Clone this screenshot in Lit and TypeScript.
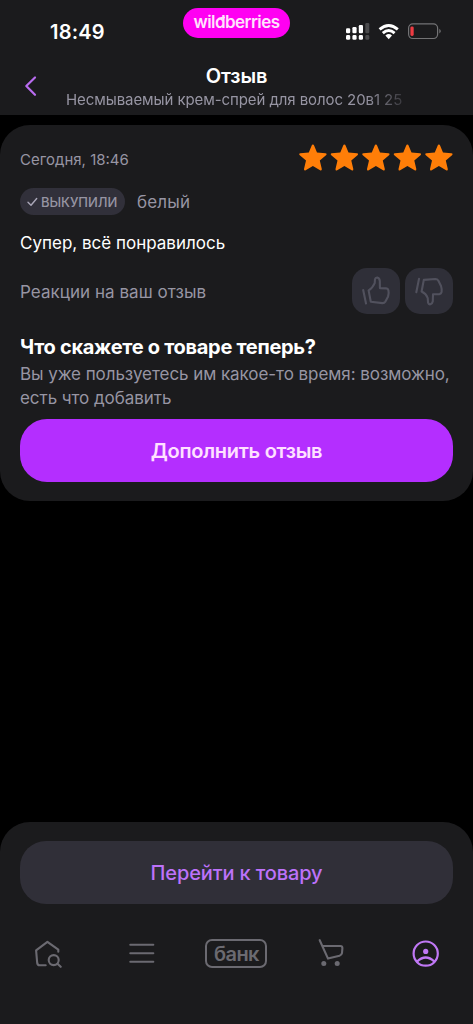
import { LitElement, html, svg, css } from "lit";
import { customElement } from "lit/decorators.js";

@customElement("status-bar")
class StatusBar extends LitElement {
  static styles = css`
    :host { display: grid; grid-template-columns: 183px 107px 1fr; height: 60px; }
    .time { padding: 20px 0 0 50px; font-size: 20px; line-height: 25px; font-weight: 600; letter-spacing: 0.2px; color: #fff; }
    .brand { height: 30px; margin-top: 8px; border-radius: 15px; background: #ff00f2; color: #ffe3fd; font-size: 17px; font-weight: 600; line-height: 29px; text-align: center; letter-spacing: -0.55px; }
    .stem { position: relative; }
    .stem::after { content: ""; position: absolute; right: 0; top: 5px; width: 7px; height: 1.6px; border-radius: 1px; background: currentColor; transform: rotate(-12deg); }
    .icons { padding: 20px 0 0 55px; }
    svg { display: block; }
  `;
  render() {
    return html`
      <div class="time">18:49</div>
      <div class="brand">wil<span class="stem">d</span>berries</div>
      <div class="icons">
        <svg width="98" height="24" viewBox="345 20 98 24">
          <g fill="#fff">
            <rect x="346" y="28.3" width="4.2" height="5" rx="1.2" />
            <rect x="352.4" y="27" width="4.2" height="6.3" rx="1.2" />
            <rect x="358.8" y="25" width="4.2" height="8.3" rx="1.2" />
            <rect x="346" y="35" width="4.2" height="4.8" rx="1.4" />
            <rect x="352.4" y="35" width="4.2" height="4.8" rx="1.4" />
            <rect x="358.8" y="35" width="4.2" height="4.8" rx="1.4" />
          </g>
          <g fill="#4b4b4d">
            <rect x="365.3" y="23" width="4" height="10.3" rx="1.2" />
            <rect x="365.3" y="35" width="4" height="4.8" rx="1.4" />
          </g>
          <g fill="none" stroke="#fff" stroke-width="2.9">
            <path d="M379.6 29.4Q388.7 21.4 397.8 29.4" />
            <path d="M382.8 33.1Q388.7 28 394.6 33.1" />
          </g>
          <path d="M385.4 35.4Q388.7 32.8 392 35.4L388.7 39.2Z" fill="#fff" />
          <rect x="408.6" y="23.9" width="29" height="14.6" rx="4.2" fill="none" stroke="#737375" stroke-width="1.2" />
          <path d="M439.3 28.8Q442.3 31.2 439.3 33.6Z" fill="#737375" />
          <rect x="410.4" y="26.4" width="3.3" height="9.6" rx="1.4" fill="#ed3b42" />
        </svg>
      </div>
    `;
  }
}

@customElement("page-header")
class PageHeader extends LitElement {
  static styles = css`
    :host { display: grid; grid-template-columns: 66px 341px 66px; height: 55px; }
    .back { padding: 15px 0 0 24px; }
    .titles { text-align: center; white-space: nowrap; }
    .title { padding-top: 4px; font-size: 20px; line-height: 24px; font-weight: 600; color: #fff; letter-spacing: -0.1px; }
    .product { text-align: left; font-size: 15px; line-height: 24px; color: #9795a3; letter-spacing: -0.08px;
      -webkit-mask-image: linear-gradient(90deg, #000 300px, transparent 348px); mask-image: linear-gradient(90deg, #000 300px, transparent 348px); }
    svg { display: block; }
  `;
  render() {
    return html`
      <div class="back">
        <svg width="14" height="22" viewBox="0 0 14 22" fill="none" stroke="#b96cf0" stroke-width="2.2" stroke-linecap="round" stroke-linejoin="round"><path d="M11 2.5L2.3 11L11 19.8" /></svg>
      </div>
      <div class="titles">
        <div class="title">Отзыв</div>
        <div class="product">Несмываемый крем-спрей для волос 20в1 25</div>
      </div>
    `;
  }
}

@customElement("review-card")
class ReviewCard extends LitElement {
  static styles = css`
    :host { display: block; box-sizing: border-box; height: 376px; padding: 18px 20px 0; border-radius: 30px; background: #1b1b1d; color: #9795a3; white-space: nowrap; }
    .top { display: flex; justify-content: space-between; height: 34px; }
    .date { font-size: 15px; line-height: 33px; letter-spacing: 0; }
    .stars { display: block; margin-right: -1px; }
    .meta { display: flex; align-items: center; gap: 12px; height: 27px; margin-top: 11px; }
    .badge { display: flex; align-items: center; box-sizing: border-box; width: 105px; height: 27px; padding-left: 7px; gap: 3px; border-radius: 14px; background: #31303a; font-size: 13px; font-weight: 500; letter-spacing: -0.05px; }
    .variant { font-size: 17px; letter-spacing: 0.15px; }
    .comment { margin-top: 15px; font-size: 17px; line-height: 26px; color: #fff; }
    .reactions { display: flex; align-items: center; gap: 5px; height: 46px; margin-top: 12px; }
    .reactions span { flex: 1; padding-top: 2px; font-size: 17px; letter-spacing: 0.04px; }
    .thumb { display: block; width: 48px; height: 46px; border-radius: 15px; background: #2f2f38; }
    .question { margin-top: 20px; font-size: 20px; line-height: 26px; font-weight: 700; color: #fff; letter-spacing: -0.3px; }
    .hint { margin-top: 2px; font-size: 17px; line-height: 24px; letter-spacing: -0.06px; }
    .hint div { display: table; }
    .add { margin-top: 9px; height: 63px; border-radius: 27px; background: #b42eff; color: #ffe1ff; font-size: 20px; font-weight: 600; line-height: 65px; text-align: center; letter-spacing: -0.27px; }
    svg { display: block; }
  `;
  render() {
    const star = "M13.9 1.6Q14.8 1.6 15.2 2.7L18 9.6L26.5 10.3Q28.4 10.7 27 12.2L20.8 17.5L22.8 25.9Q23 28 21.1 27.2L13.9 22.9L6.7 27.2Q4.8 28 5 25.9L7 17.5L.8 12.2Q-.6 10.7 1.3 10.3L9.8 9.6L12.6 2.7Q13 1.6 13.9 1.6Z";
    return html`
      <div class="top">
        <div class="date">Сегодня, 18:46</div>
        <svg class="stars" width="155" height="30" viewBox="0 0 155 30" fill="#ff7e08">
          ${[0, 1, 2, 3, 4].map((i) => svg`<path transform="translate(${i * 31.5} 0)" d=${star} />`)}
        </svg>
      </div>
      <div class="meta">
        <div class="badge">
          <svg width="11" height="10" viewBox="0 0 11 10" fill="none" stroke="#aaa7b8" stroke-width="1.4" stroke-linecap="round" stroke-linejoin="round"><path d="M1 5.3L4 8.3L9.7 1.5" /></svg>
          <span>ВЫКУПИЛИ</span>
        </div>
        <span class="variant">белый</span>
      </div>
      <div class="comment"><span>Супер, всё понравилось</span></div>
      <div class="reactions">
        <span>Реакции на ваш отзыв</span>
        <svg class="thumb" viewBox="352 268 48 46" fill="none" stroke="#51515d" stroke-width="2.1" stroke-linecap="round" stroke-linejoin="round">
          <path d="M363.2 290L366 303.5M368.6 290.4L370.8 301.7L382.3 303.1Q384.3 303.2 385.4 301.6L388.1 296.4Q389.1 292.8 388.4 290.2Q388 288.6 386.2 288.4L379.9 288.1L379.8 280.8Q379.4 278 377.2 277.5Q375.4 277.4 375 279.2L374.7 283.2Q372.4 288.4 368.6 290.4Z" />
        </svg>
        <svg class="thumb" viewBox="405 268 48 46" fill="none" stroke="#51515d" stroke-width="2.1" stroke-linecap="round" stroke-linejoin="round">
          <path d="M419 278.9L416.3 292.2M423.8 279.9L421.6 291.5Q426 293.5 427.7 298L428.1 302.8Q428.6 304.7 430.4 304.3Q432.4 303.6 432.8 301.3L433 294.3L439.4 294.1Q441.2 293.9 441.6 292.1Q442.1 289.4 441 286L438.4 280.7Q437.4 279 435.3 279Z" />
        </svg>
      </div>
      <div class="question"><span>Что скажете о товаре теперь?</span></div>
      <div class="hint">
        <div>Вы уже пользуетесь им какое-то время: возможно,</div>
        <div>есть что добавить</div>
      </div>
      <div class="add"><span>Дополнить отзыв</span></div>
    `;
  }
}

@customElement("bottom-panel")
class BottomPanel extends LitElement {
  static styles = css`
    :host { display: block; box-sizing: border-box; height: 202px; padding-top: 19px; border-radius: 30px 30px 0 0; background: #1b1b1d; }
    .go { margin: 0 20px; height: 63px; border-radius: 26px; background: #302f38; color: #bd72fa; font-size: 20px; font-weight: 500; line-height: 65px; text-align: center; letter-spacing: -0.13px; }
    nav { display: grid; grid-template-columns: repeat(5, 1fr); align-items: center; justify-items: center; height: 40px; margin-top: 29px; }
    svg { display: block; }
    .bank { box-sizing: border-box; width: 62px; height: 29px; border: 2px solid #6b6a71; border-radius: 7px; color: #6b6a71; font-size: 20px; font-weight: 600; line-height: 27px; text-align: center; letter-spacing: -0.6px; }
  `;
  render() {
    return html`
      <div class="go"><span>Перейти к товару</span></div>
      <nav>
        <svg width="30" height="30" viewBox="32.3 937.5 30 30" fill="none" stroke="#6b6a71" stroke-width="2.1" stroke-linecap="round" stroke-linejoin="round">
          <path d="M58.6 951.2V949.2L47.7 941.4L36.4 949.8L37.5 962.5Q37.8 964.6 39.8 964.8H46" />
          <circle cx="54" cy="959.6" r="5" /><path d="M57.8 963.3L61 966.3" />
        </svg>
        <svg width="26" height="22" viewBox="0.7 -0.5 26 22" stroke="#6b6a71" stroke-width="2.1" stroke-linecap="round"><path d="M2 2.3H25M2 10.8H25M2 19.3H25" /></svg>
        <div class="bank">банк</div>
        <svg width="30" height="30" viewBox="316 938 30 30" fill="none" stroke="#6b6a71" stroke-width="2.1" stroke-linecap="round" stroke-linejoin="round">
          <path d="M319.7 940.2L328 958.6L339.5 955.7Q341.6 955 342 953L342.4 948.2Q342.4 946 340.4 946H322.5" />
          <g fill="#6b6a71" stroke="none"><circle cx="323.8" cy="963.6" r="2.5" /><circle cx="337.2" cy="963.6" r="2.5" /></g>
        </svg>
        <svg width="30" height="30" viewBox="411 938 30 30" fill="none" stroke="#c078f5" stroke-width="2.2" stroke-linecap="round">
          <circle cx="425.7" cy="953.6" r="12.1" /><path d="M417 961.6Q425.7 953.4 434.4 961.6" />
          <circle cx="425.7" cy="951.4" r="2.6" fill="#c078f5" stroke="none" />
        </svg>
      </nav>
    `;
  }
}

@customElement("app-root")
class AppRoot extends LitElement {
  static styles = css`
    :host { display: flex; flex-direction: column; width: 473px; height: 1024px; overflow: hidden; background: #000; font-family: Inter, "Noto Sans", sans-serif; }
    header { height: 115px; background: #1b1b1d; }
    review-card { margin-top: 10px; }
    bottom-panel { margin-top: auto; }
  `;
  render() {
    return html`
      <header><status-bar></status-bar><page-header></page-header></header>
      <review-card></review-card>
      <bottom-panel></bottom-panel>
    `;
  }
}
